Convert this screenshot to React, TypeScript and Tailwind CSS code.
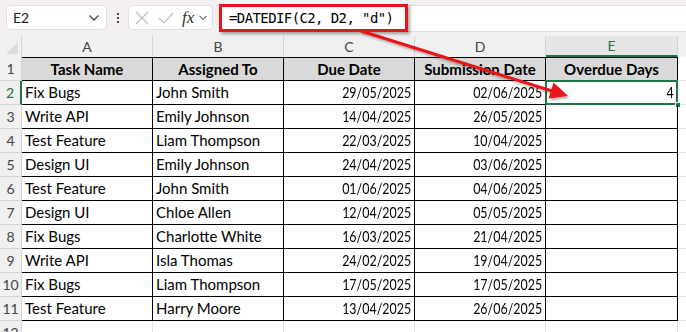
import React from "react";

const rows: [string, string, string, string][] = [
  ["Fix Bugs", "John Smith", "29/05/2025", "02/06/2025"],
  ["Write API", "Emily Johnson", "14/04/2025", "26/05/2025"],
  ["Test Feature", "Liam Thompson", "22/03/2025", "10/04/2025"],
  ["Design UI", "Emily Johnson", "24/04/2025", "03/06/2025"],
  ["Test Feature", "John Smith", "01/06/2025", "04/06/2025"],
  ["Design UI", "Chloe Allen", "12/04/2025", "05/05/2025"],
  ["Fix Bugs", "Charlotte White", "16/03/2025", "21/04/2025"],
  ["Write API", "Isla Thomas", "24/02/2025", "19/04/2025"],
  ["Fix Bugs", "Liam Thompson", "17/05/2025", "17/05/2025"],
  ["Test Feature", "Harry Moore", "13/04/2025", "26/06/2025"],
];

const font = { fontFamily: "Lato, 'Open Sans', sans-serif" };

function DateText({ v }: { v: string }) {
  return <span className="inline-block origin-right scale-x-[0.83] whitespace-nowrap">{v}</span>;
}

export default function App() {
  return (
    <div className="relative w-[686px] h-[332px] overflow-hidden bg-white" style={font}>
      {/* Formula bar */}
      <div className="flex h-[36px] bg-[#f3f0ef] pt-[5px]">
        <div className="ml-[6px] w-[101px] h-[25px] bg-white rounded-[5px] border border-[#e3dfde] flex items-center justify-between pl-[6px] pr-[6px]">
          <span className="text-[14px] text-[#222]">E2</span>
          <svg width="12" height="8" viewBox="0 0 12 8">
            <path d="M1.5 1.5 L6 6 L10.5 1.5" fill="none" stroke="#444" strokeWidth="1.3" />
          </svg>
        </div>
        <div className="w-[21px] flex flex-col items-center justify-center gap-[2px] h-[25px]">
          <span className="w-[2px] h-[2px] bg-[#444]" />
          <span className="w-[2px] h-[2px] bg-[#444]" />
          <span className="w-[2px] h-[2px] bg-[#444]" />
        </div>
        <div className="w-[85px] h-[25px] bg-white rounded-[5px] border border-[#e3dfde] flex items-center pl-[5px]">
          <svg width="16" height="16" viewBox="0 0 16 16">
            <path d="M2 2 L14 14 M14 2 L2 14" stroke="#bdbdbd" strokeWidth="1.2" fill="none" />
          </svg>
          <svg width="18" height="16" viewBox="0 0 18 16" className="ml-[7px]">
            <path d="M2 8 L7 13 L16 3" stroke="#bdbdbd" strokeWidth="1.2" fill="none" />
          </svg>
          <span
            className="ml-[7px] text-[17px] italic text-[#333] leading-none"
            style={{ fontFamily: "'Liberation Serif', serif" }}
          >
            fx
          </span>
          <svg width="10" height="8" viewBox="0 0 10 8" className="ml-[4px]">
            <path d="M1.5 2 L5 5.5 L8.5 2" fill="none" stroke="#777" strokeWidth="1.1" />
          </svg>
        </div>
        <div className="ml-[6px] flex-1 h-[27px] bg-white rounded-l-[5px] border border-[#e3dfde] border-r-0" />
      </div>

      {/* Red formula highlight */}
      <div className="absolute left-[219px] top-[4px] w-[189px] h-[28px] border-[3px] border-[#e8141a] flex items-center pl-[7px] shadow-[2px_2px_3px_rgba(0,0,0,0.35)] bg-white">
        <span className="text-[14px] text-black" style={{ fontFamily: "'DejaVu Sans Mono', monospace", letterSpacing: "-0.6px" }}>
          =DATEDIF(C2, D2, "d")
        </span>
      </div>

      {/* Grid */}
      <div className="grid grid-cols-[22px_131px_131px_131px_131px_132px_1fr] text-[15px] text-black">
        {/* column header row */}
        <div className="h-[21px] bg-[#f0f0f0] border-r border-[#d4d4d4] relative">
          <svg width="14" height="14" viewBox="0 0 14 14" className="absolute right-[2px] bottom-[2px]">
            <path d="M13 1 L13 13 L1 13 Z" fill="#dcdcdc" />
          </svg>
        </div>
        {["A", "B", "C", "D"].map((c) => (
          <div key={c} className="h-[21px] bg-[#f0f0f0] border-r border-[#d4d4d4] flex items-center justify-center text-[14px] text-[#444]">
            {c}
          </div>
        ))}
        <div className="h-[21px] bg-[#e6e6e6] border-r border-[#d4d4d4] border-b-2 border-b-[#217346] flex items-center justify-center text-[14px] text-[#217346]">
          E
        </div>
        <div className="h-[21px] bg-[#f0f0f0]" />

        {/* row 1 */}
        <div className="h-[24px] bg-[#f0f0f0] border-r border-b border-[#d4d4d4] flex items-end justify-center pb-[1px] text-[14px] text-[#444]">
          1
        </div>
        {["Task Name", "Assigned To", "Due Date", "Submission Date", "Overdue Days"].map((h) => (
          <div
            key={h}
            className="h-[24px] bg-[#d9d9d9] border-t border-b border-r border-black flex items-center justify-center font-bold"
          >
            {h}
          </div>
        ))}
        <div className="h-[24px] border-b border-[#e1e1e1]" />

        {rows.map((r, i) => {
          const sel = i === 0;
          return (
            <React.Fragment key={i}>
              <div
                className={
                  "h-[24px] bg-[#f0f0f0] border-b border-[#d4d4d4] flex items-end justify-center pb-[1px] text-[14px] " +
                  (sel ? "border-r-2 border-r-[#217346] bg-[#e2e2e2] text-[#217346]" : "border-r text-[#444]")
                }
              >
                {i + 2}
              </div>
              <div className="h-[24px] border-b border-r border-black flex items-center pl-[3px] whitespace-nowrap overflow-hidden">{r[0]}</div>
              <div className="h-[24px] border-b border-r border-black flex items-center pl-[3px] whitespace-nowrap overflow-hidden">{r[1]}</div>
              <div className="h-[24px] border-b border-r border-black flex items-center justify-end pr-[3px]">
                <DateText v={r[2]} />
              </div>
              <div className="h-[24px] border-b border-r border-black flex items-center justify-end pr-[3px]">
                <DateText v={r[3]} />
              </div>
              <div className="relative h-[24px] border-b border-r border-black flex items-center justify-end pr-[3px]">
                {sel && (
                  <>
                    <div className="absolute -left-[1px] -top-[1px] -right-[1px] -bottom-[1px] border-2 border-[#217346]" />
                    <div className="absolute -right-[4px] -bottom-[4px] w-[6px] h-[6px] bg-[#217346] border border-white" />
                    <span className="relative">
                      <DateText v="4" />
                    </span>
                  </>
                )}
              </div>
              <div className="h-[24px] border-b border-[#e1e1e1]" />
            </React.Fragment>
          );
        })}

        {/* row 12 */}
        <div className="h-[12px] overflow-hidden bg-[#f0f0f0] border-r border-[#d4d4d4] flex items-start justify-center pt-[4px] text-[14px] leading-[16px] text-[#444]">
          12
        </div>
        {[0, 1, 2, 3, 4].map((k) => (
          <div key={k} className="h-[12px] border-r border-[#e1e1e1]" />
        ))}
        <div className="h-[12px]" />
      </div>

      {/* Red arrow */}
      <svg className="absolute left-0 top-0 pointer-events-none" width="686" height="332" viewBox="0 0 686 332">
        <defs>
          <filter id="sh" x="-10%" y="-10%" width="120%" height="130%">
            <feDropShadow dx="1.5" dy="2" stdDeviation="1.2" floodColor="#000" floodOpacity="0.3" />
          </filter>
        </defs>
        <g filter="url(#sh)">
          <line x1="361" y1="31" x2="552" y2="91" stroke="#e8141a" strokeWidth="3" />
          <path d="M568 96 L548.5 98.5 L553.5 82.5 Z" fill="#e8141a" />
        </g>
      </svg>
    </div>
  );
}
